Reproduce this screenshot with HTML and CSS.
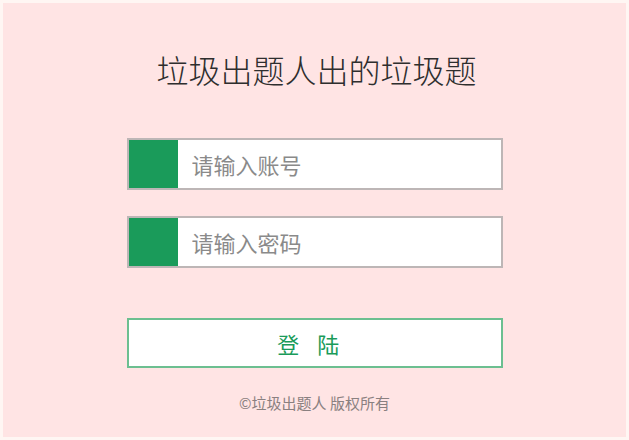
FILE: index.html
```html
<!DOCTYPE html>
<html lang="zh">
<head>
<meta charset="utf-8">
<title>登陆</title>
<link rel="stylesheet" href="styles.css">
</head>
<body>
<div class="page">
  <h1 class="title">垃圾出题人出的垃圾题</h1>
  <form class="form">
    <div class="field">
      <span class="field-icon"></span>
      <input class="field-input" type="text" placeholder="请输入账号">
    </div>
    <div class="field">
      <span class="field-icon"></span>
      <input class="field-input" type="password" placeholder="请输入密码">
    </div>
    <button class="submit" type="button">登 陆</button>
  </form>
  <p class="footer">©垃圾出题人 版权所有</p>
</div>
</body>
</html>
```
FILE: styles.css
```css
html, body {
  margin: 0;
  padding: 0;
  background: #fff6f3;
}
body {
  padding: 3px;
  font-family: "Noto Sans CJK SC", "Noto Sans", sans-serif;
}
.page {
  height: 434px;
  background: #ffe4e4;
  box-sizing: border-box;
  padding-top: 46px;
  display: flex;
  flex-direction: column;
  align-items: center;
}
.title {
  margin: 0;
  font-size: 32px;
  line-height: 40px;
  font-weight: 300;
  color: #2e2e2e;
  padding-left: 4px;
}
.form {
  margin-top: 49px;
  width: 376px;
  display: flex;
  flex-direction: column;
  gap: 26px;
}
.field {
  display: flex;
  height: 52px;
  box-sizing: border-box;
  border: 2px solid #bdb6b6;
  background: #fff;
}
.field-icon {
  width: 49px;
  flex: none;
  background: #1a9b5a;
}
.field-input {
  flex: 1;
  min-width: 0;
  border: none;
  outline: none;
  background: #fff;
  padding: 0 0 0 14px;
  font-family: "Noto Sans CJK SC", "Noto Sans", sans-serif;
  font-size: 22px;
  color: #333;
}
.field-input::placeholder {
  color: #8a8a8a;
}
.submit {
  margin-top: 24px;
  height: 50px;
  box-sizing: border-box;
  border: 2px solid #6cbf90;
  background: #fff;
  color: #1a9b5a;
  font-family: "Noto Sans CJK SC", "Noto Sans", sans-serif;
  font-size: 22px;
  letter-spacing: 6.5px;
  padding: 0 6px 0 0;
  cursor: pointer;
}
.footer {
  margin: 25px 0 0 0;
  font-size: 15px;
  line-height: 20px;
  color: #8a8080;
}
```
